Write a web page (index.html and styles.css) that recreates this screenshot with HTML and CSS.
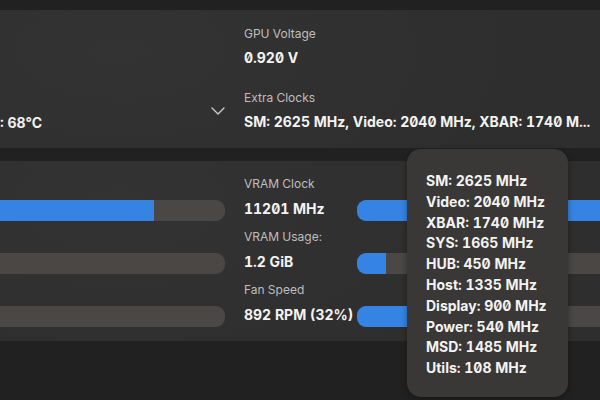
FILE: index.html
```html
<!DOCTYPE html>
<html>
<head>
<meta charset="utf-8">
<link rel="stylesheet" href="styles.css">
</head>
<body>
<div class="page">
  <section class="card card-top">
    <div class="temp-col">
      <div class="temp-value">: 68°C</div>
    </div>
    <div class="chevron-col">
      <svg class="chevron" width="14" height="8" viewBox="0 0 14 8"><path d="M1 1 L7 7 L13 1" fill="none" stroke="#d0d0d0" stroke-width="1.3" stroke-linecap="round" stroke-linejoin="round"/></svg>
    </div>
    <div class="info-col">
      <div class="label">GPU Voltage</div>
      <div class="value">0.920 V</div>
      <div class="label label-gap">Extra Clocks</div>
      <div class="value">SM: 2625 MHz, Video: 2040 MHz, XBAR: 1740 M...</div>
    </div>
  </section>

  <section class="card card-bottom">
    <div class="row">
      <div class="bar left"><div class="fill" style="width:154px"></div></div>
      <div class="stat">
        <div class="label">VRAM Clock</div>
        <div class="value">11201 MHz</div>
      </div>
      <div class="bar right"><div class="fill" style="width:260px"></div></div>
    </div>
    <div class="row">
      <div class="bar left"></div>
      <div class="stat">
        <div class="label">VRAM Usage:</div>
        <div class="value">1.2 GiB</div>
      </div>
      <div class="bar right"><div class="fill" style="width:29px"></div></div>
    </div>
    <div class="row">
      <div class="bar left"></div>
      <div class="stat">
        <div class="label">Fan Speed</div>
        <div class="value">892 RPM (32%)</div>
      </div>
      <div class="bar right"><div class="fill" style="width:120px"></div></div>
    </div>
  </section>
</div>

<div class="tooltip">
  <div>SM: 2625 MHz</div>
  <div>Video: 2040 MHz</div>
  <div>XBAR: 1740 MHz</div>
  <div>SYS: 1665 MHz</div>
  <div>HUB: 450 MHz</div>
  <div>Host: 1335 MHz</div>
  <div>Display: 900 MHz</div>
  <div>Power: 540 MHz</div>
  <div>MSD: 1485 MHz</div>
  <div>Utils: 108 MHz</div>
</div>
</body>
</html>
```

FILE: styles.css
```css
html, body {
  margin: 0;
  padding: 0;
}
body {
  width: 600px;
  height: 400px;
  overflow: hidden;
  background: #212121;
  font-family: Inter, "Noto Sans", sans-serif;
  font-feature-settings: "tnum" 1, "zero" 1;
  position: relative;
}
.page {
  padding-top: 10px;
  width: 600px;
  overflow: hidden;
}
.card {
  background: #2e2e2e;
  background-image: radial-gradient(ellipse 420px 200px at 120px 40px, rgba(255,255,255,0.025), rgba(255,255,255,0));
}
.card-top {
  height: 138px;
  display: grid;
  grid-template-columns: 205px 39px 1fr;
  box-sizing: border-box;
}
.card-bottom {
  margin-top: 13px;
  height: 180px;
  box-sizing: border-box;
  padding-top: 15px;
  display: flex;
  flex-direction: column;
  gap: 10px;
}
.temp-col {
  display: flex;
  align-items: flex-end;
  padding-bottom: 15px;
}
.temp-value {
  font-size: 14px;
  font-weight: 700;
  color: #f2f2f2;
  line-height: 20px;
}
.chevron-col {
  display: flex;
  justify-content: flex-start;
  padding-top: 97px;
  padding-left: 6px;
}
.chevron {
  display: block;
}
.info-col {
  padding-top: 16px;
  white-space: nowrap;
  overflow: hidden;
}
.label {
  font-size: 12px;
  line-height: 16px;
  color: #bebebe;
}
.label-gap {
  margin-top: 22px;
}
.value {
  font-size: 14px;
  font-weight: 700;
  line-height: 20px;
  color: #f3f3f3;
  margin-top: 6px;
}
.stat .value {
  margin-top: 7px;
}
.row {
  display: grid;
  grid-template-columns: 225px 132px 1fr;
  height: 43px;
}
.bar {
  height: 21px;
  margin-top: 24px;
  background: #4a4745;
  border-radius: 9px;
  overflow: hidden;
}
.bar.left {
  border-top-left-radius: 0;
  border-bottom-left-radius: 0;
}
.bar.right {
  margin-right: -40px;
}
.fill {
  height: 100%;
  background: #3584e4;
}
.stat {
  white-space: nowrap;
  padding-left: 19px;
}
.tooltip {
  position: absolute;
  left: 407px;
  top: 149px;
  width: 161px;
  height: 248px;
  box-sizing: border-box;
  padding: 22px 0 0 19px;
  background: #393837;
  border-radius: 14px;
  box-shadow: 0 2px 6px rgba(0, 0, 0, 0.35);
  color: #f3f3f3;
  font-size: 14px;
  font-weight: 700;
  line-height: 20.8px;
  white-space: nowrap;
}
```
